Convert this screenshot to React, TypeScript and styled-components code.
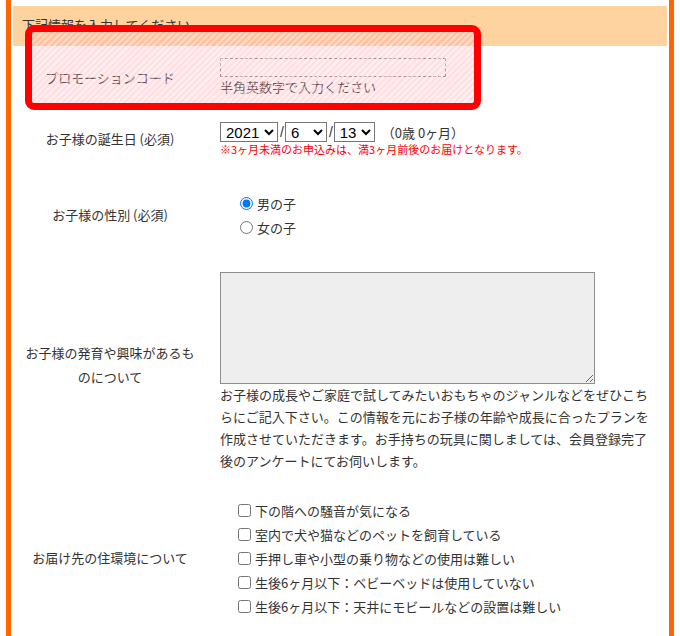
import styled, { createGlobalStyle } from 'styled-components';

const GlobalStyle = createGlobalStyle`
  html, body {
    margin: 0;
    padding: 0;
    background: #fff;
  }
  body {
    font-family: "Noto Sans CJK JP", "Liberation Sans", sans-serif;
    font-size: 13px;
    color: #333;
    overflow: hidden;
  }
`;

const Frame = styled.div`
  position: relative;
  box-sizing: border-box;
  width: 668px;
  min-height: 100vh;
  margin-left: 6px;
  padding: 6px 2px 0;
  border-left: 5px solid #ff6600;
  border-right: 5px solid #ff6600;
`;

const Heading = styled.div`
  height: 40px;
  box-sizing: border-box;
  padding: 9px 9px 0;
  line-height: 20px;
  background: #ffd39f;
  color: #333;
`;

const Highlight = styled.div`
  position: absolute;
  top: 25px;
  left: 14px;
  width: 456px;
  height: 85px;
  box-sizing: border-box;
  border: 7px solid #ff0000;
  border-radius: 9px;
  background: repeating-linear-gradient(
    135deg,
    rgba(255, 150, 160, 0.3) 0 2.2px,
    rgba(255, 222, 226, 0.5) 2.2px 4.4px
  );
  pointer-events: none;
`;

const Row = styled.div<{ $pad: number }>`
  display: grid;
  grid-template-columns: 194px 1fr;
  & > * {
    padding-top: ${(p) => p.$pad}px;
    padding-bottom: ${(p) => p.$pad}px;
  }
`;

const Label = styled.div<{ $lift?: number }>`
  display: flex;
  align-items: center;
  justify-content: center;
  padding-left: 12px;
  padding-right: 12px;
  text-align: center;
  line-height: 24px;
  color: #333;
  && {
    padding-bottom: ${(p) => (p.$lift ? `${p.$lift}px` : undefined)};
  }
`;

const Value = styled.div`
  padding-left: 13px;
  padding-right: 17px;
  min-width: 0;
`;

const CodeInput = styled.input`
  display: block;
  box-sizing: border-box;
  width: 226px;
  height: 19px;
  margin: 0;
  border: 1px dashed #888;
  background: transparent;
  outline: none;
`;

const Hint = styled.div`
  line-height: 20px;
  color: #333;
`;

const DateLine = styled.div`
  display: flex;
  align-items: center;
  height: 20px;
`;

const Select = styled.select<{ $w: number }>`
  box-sizing: border-box;
  width: ${(p) => p.$w}px;
  height: 20px;
  margin: 0;
  padding: 0 0 0 1px;
  font-family: "Liberation Sans", Arial, sans-serif;
  font-size: 15px;
  color: #000;
  background: #fff;
  border: 1px solid #767676;
  border-radius: 0;
`;

const Slash = styled.span`
  padding: 0 1px 0 2px;
  font-family: "Liberation Sans", Arial, sans-serif;
  font-size: 14px;
  color: #333;
`;

const Age = styled.span`
  margin-left: 7px;
  color: #333;
`;

const Notice = styled.div`
  font-size: 11px;
  line-height: 14px;
  color: #ff0000;
`;

const Choices = styled.div<{ $indent: number }>`
  display: flex;
  flex-direction: column;
  padding-left: ${(p) => p.$indent}px;
`;

const Choice = styled.label`
  display: flex;
  align-items: center;
  height: 24px;
  color: #333;
  white-space: nowrap;
`;

const Radio = styled.input`
  width: 13px;
  height: 13px;
  margin: 0 4px 0 0;
`;

const Check = styled.input`
  width: 13px;
  height: 13px;
  margin: 0 4px 0 0;
`;

const Memo = styled.textarea`
  display: block;
  box-sizing: border-box;
  width: 375px;
  height: 112px;
  margin: 0;
  background: #eeeeee;
  border: 1px solid #8f8f8f;
  border-radius: 0;
`;

const Guide = styled.p`
  width: 432px;
  margin: 0;
  line-height: 22px;
  color: #333;
`;

const homeOptions = [
  '下の階への騒音が気になる',
  '室内で犬や猫などのペットを飼育している',
  '手押し車や小型の乗り物などの使用は難しい',
  '生後6ヶ月以下：ベビーベッドは使用していない',
  '生後6ヶ月以下：天井にモビールなどの設置は難しい',
];

export default function App() {
  return (
    <>
      <GlobalStyle />
      <Frame>
        <Heading>下記情報を入力してください</Heading>

        <Row $pad={12}>
          <Label>プロモーションコード</Label>
          <Value>
            <CodeInput type="text" />
            <Hint>半角英数字で入力ください</Hint>
          </Value>
        </Row>

        <Row $pad={13}>
          <Label>お子様の誕生日 (必須)</Label>
          <Value>
            <DateLine>
              <Select $w={58} defaultValue="2021">
                <option>2021</option>
              </Select>
              <Slash>/</Slash>
              <Select $w={42} defaultValue="6">
                <option>6</option>
              </Select>
              <Slash>/</Slash>
              <Select $w={41} defaultValue="13">
                <option>13</option>
              </Select>
              <Age>（0歳 0ヶ月）</Age>
            </DateLine>
            <Notice>※3ヶ月未満のお申込みは、満3ヶ月前後のお届けとなります。</Notice>
          </Value>
        </Row>

        <Row $pad={22}>
          <Label>お子様の性別 (必須)</Label>
          <Value>
            <Choices $indent={20}>
              <Choice>
                <Radio type="radio" name="sex" defaultChecked />
                男の子
              </Choice>
              <Choice>
                <Radio type="radio" name="sex" />
                女の子
              </Choice>
            </Choices>
          </Value>
        </Row>

        <Row $pad={11}>
          <Label $lift={25}>お子様の発育や興味があるものについて</Label>
          <Value>
            <Memo />
            <Guide>
              お子様の成長やご家庭で試してみたいおもちゃのジャンルなどをぜひこちらにご記入下さい。この情報を元にお子様の年齢や成長に合ったプランを作成させていただきます。お手持ちの玩具に関しましては、会員登録完了後のアンケートにてお伺いします。
            </Guide>
          </Value>
        </Row>

        <Row $pad={15}>
          <Label>お届け先の住環境について</Label>
          <Value>
            <Choices $indent={18}>
              {homeOptions.map((text) => (
                <Choice key={text}>
                  <Check type="checkbox" />
                  {text}
                </Choice>
              ))}
            </Choices>
          </Value>
        </Row>

        <Highlight />
      </Frame>
    </>
  );
}
